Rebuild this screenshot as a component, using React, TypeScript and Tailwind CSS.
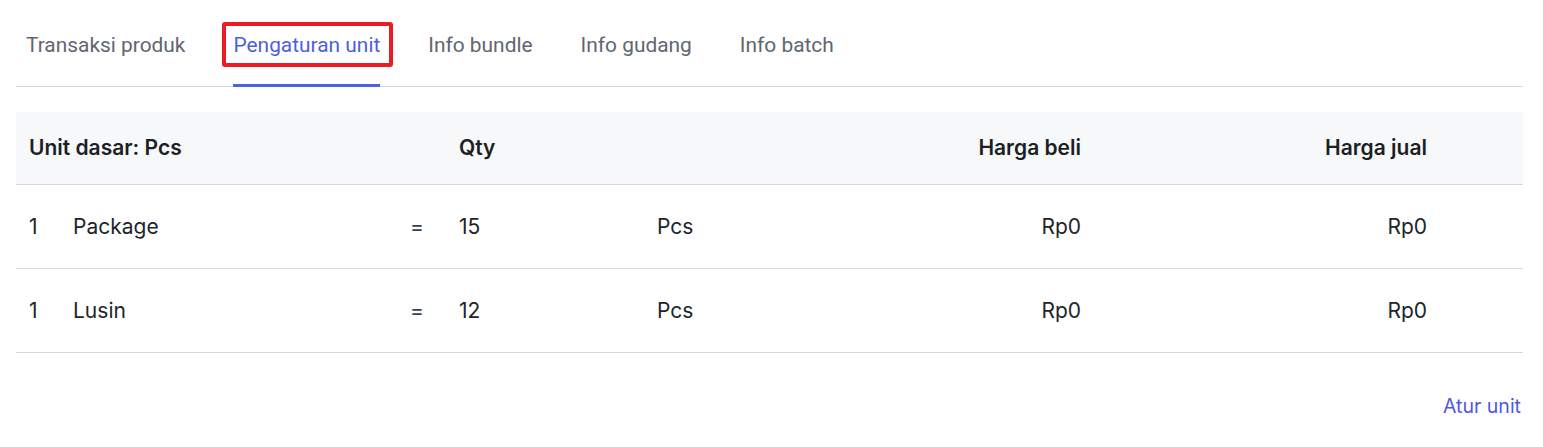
const tabs = ["Transaksi produk", "Pengaturan unit", "Info bundle", "Info gudang", "Info batch"];

const rows = [
  { qty: "1", name: "Package", conv: "15", unit: "Pcs", beli: "Rp0", jual: "Rp0" },
  { qty: "1", name: "Lusin", conv: "12", unit: "Pcs", beli: "Rp0", jual: "Rp0" },
];

const cols = "grid grid-cols-[44px_337px_49px_198px_200px_224px_346px] pl-[13px]";

export default function App() {
  const active = 1;
  return (
    <div className="w-[1543px] h-[447px] bg-white pl-4 pr-5 font-['Inter',sans-serif] text-[#212529]">
      {/* Tabs */}
      <div className="h-[87px] border-b border-[#d4d8e0] flex gap-12 pl-[10px] font-['Roboto',sans-serif] text-[20.9px]">
        {tabs.map((t, i) => (
          <div key={t} className="relative flex flex-col">
            <div className={`flex-1 flex items-center pt-[7px] ${i === active ? "text-[#4e5fdc]" : "text-[#5f6670]"}`}>
              {t}
            </div>
            <div className={`h-[3px] -mb-px ${i === active ? "bg-[#4a63e0]" : "bg-transparent"}`} />
            {i === active && (
              <div className="absolute left-[-11px] right-[-13px] top-[22px] h-[45px] border-4 border-[#ec1c24] rounded-[3px]" />
            )}
          </div>
        ))}
      </div>

      {/* Table */}
      <div className="mt-[25px] text-[21px]">
        <div className={`${cols} h-[73px] items-center bg-[#f7f8fa] border-b border-[#d4d8e0] font-semibold text-[#1c1f23]`}>
          <div className="col-span-3">Unit dasar: Pcs</div>
          <div>Qty</div>
          <div />
          <div className="text-right">Harga beli</div>
          <div className="text-right">Harga jual</div>
        </div>
        {rows.map((r) => (
          <div key={r.name} className={`${cols} h-[84px] items-center border-b border-[#d4d8e0]`}>
            <div>{r.qty}</div>
            <div>{r.name}</div>
            <div className="text-[#3a3f45]">=</div>
            <div>{r.conv}</div>
            <div>{r.unit}</div>
            <div className="text-right">{r.beli}</div>
            <div className="text-right">{r.jual}</div>
          </div>
        ))}
      </div>

      <div className="flex justify-end mt-[39px] pr-[2px]">
        <a className="text-[19.5px] text-[#5058e0] cursor-pointer">Atur unit</a>
      </div>
    </div>
  );
}
